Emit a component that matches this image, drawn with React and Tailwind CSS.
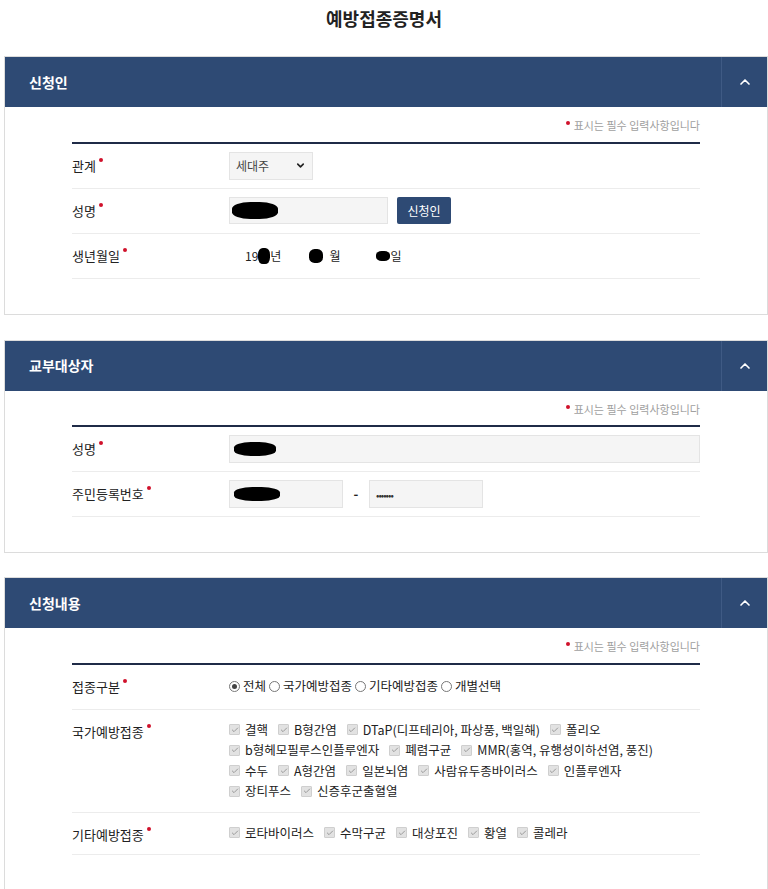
import { ChevronUp, ChevronDown, Check } from "lucide-react";

const font = { fontFamily: '"Noto Sans CJK KR", "Noto Sans", sans-serif' };

// small red dot after the label
const Req = () => <span className="relative -top-[9px] ml-[3px] inline-block h-[4px] w-[4px] rounded-full bg-[#d0112b]"></span>;

const Blob = ({ w = "w-[46px]", h = "h-[16px]" }) => (
  <span className={`inline-block ${w} ${h} rounded-[40%] bg-black align-middle`}></span>
);

const Panel = ({ title, children }) => (
  <section className="mx-[4px] mr-0 border border-[#dcdcdc] bg-white">
    <div className="flex h-[50px] items-center bg-[#2e4a74]">
      <h2 className="flex-1 pl-[24px] text-[14px] font-bold text-white">{title}</h2>
      <div className="flex h-full w-[46px] items-center justify-center border-l border-[#3f5a84]">
        <ChevronUp size={16} strokeWidth={2.5} className="text-white" />
      </div>
    </div>
    <div className="px-[67px] pb-[35px] pt-[10px]">
      <p className="pb-[8px] text-right text-[11px] text-[#a0a0a0]">
        <span className="relative -top-[5px] mr-[4px] inline-block h-[4px] w-[4px] rounded-full bg-[#d0112b]"></span>
        표시는 필수 입력사항입니다
      </p>
      <div className="border-t-2 border-[#1f2b47]">{children}</div>
    </div>
  </section>
);

const Row = ({ label, children, tall }) => (
  <div className={`flex border-b border-[#ececec] ${tall ? "py-[10px]" : "min-h-[45px] items-center"}`}>
    <div className={`w-[157px] shrink-0 text-[13px] text-[#222] ${tall ? "pt-[2px]" : ""}`}>
      {label}
      <Req />
    </div>
    <div className="flex-1">{children}</div>
  </div>
);

const Box = ({ children }) => (
  <span className="mr-[10px] inline-flex items-center whitespace-nowrap text-[12.5px] leading-[20.5px] text-[#222]">
    <span className="mr-[5px] flex h-[11px] w-[11px] items-center justify-center rounded-[1px] border border-[#cfcfcf] bg-[#e2e2e2]">
      <Check size={8} strokeWidth={3} className="text-[#9a9a9a]" />
    </span>
    {children}
  </span>
);

const Radio = ({ on, children }) => (
  <span className="mr-[3px] inline-flex items-center text-[12.5px] text-[#222]">
    <span className="mr-[3px] flex h-[11px] w-[11px] items-center justify-center rounded-full border border-[#777] bg-white">
      {on && <span className="h-[5px] w-[5px] rounded-full bg-[#444]"></span>}
    </span>
    {children}
  </span>
);

export default function App() {
  const national = [
    "결핵", "B형간염", "DTaP(디프테리아, 파상풍, 백일해)", "폴리오",
    "b형헤모필루스인플루엔자", "폐렴구균", "MMR(홍역, 유행성이하선염, 풍진)",
    "수두", "A형간염", "일본뇌염", "사람유두종바이러스", "인플루엔자",
    "장티푸스", "신증후군출혈열",
  ];
  const other = ["로타바이러스", "수막구균", "대상포진", "황열", "콜레라"];

  return (
    <div className="min-h-[889px] bg-white" style={font}>
      <h1 className="pb-[24px] pt-[5px] text-center text-[18px] font-bold text-[#222]">예방접종증명서</h1>

      <Panel title="신청인">
        <Row label="관계">
          <div className="flex h-[28px] w-[84px] items-center justify-between border border-[#e4e4e4] bg-[#f5f5f5] px-[6px] text-[12px] text-[#444]">
            세대주
            <ChevronDown size={11} strokeWidth={3.5} className="text-[#222]" />
          </div>
        </Row>
        <Row label="성명">
          <div className="flex items-center gap-[9px]">
            <div className="flex h-[27px] w-[159px] items-center border border-[#e4e4e4] bg-[#f5f5f5] pl-[2px]">
              <Blob w="w-[46px]" h="h-[17px]" />
            </div>
            <button className="h-[27px] w-[54px] rounded-[2px] bg-[#2e4a74] text-[12px] text-white">신청인</button>
          </div>
        </Row>
        <Row label="생년월일">
          <div className="flex items-center pl-[16px] text-[12px] text-[#222]">
            19<Blob w="w-[12px]" h="h-[16px]" />년
            <span className="ml-[28px]"></span><Blob w="w-[14px]" h="h-[14px]" /><span className="ml-[6px]">월</span>
            <span className="ml-[36px]"></span><Blob w="w-[14px]" h="h-[10px]" />일
          </div>
        </Row>
      </Panel>

      <div className="h-[25px]"></div>

      <Panel title="교부대상자">
        <Row label="성명">
          <div className="flex h-[28px] items-center border border-[#e4e4e4] bg-[#f5f5f5] pl-[4px]">
            <Blob w="w-[42px]" h="h-[14px]" />
          </div>
        </Row>
        <Row label="주민등록번호">
          <div className="flex items-center">
            <div className="flex h-[28px] w-[114px] items-center border border-[#e4e4e4] bg-[#f5f5f5] pl-[4px]">
              <Blob w="w-[46px]" h="h-[14px]" />
            </div>
            <span className="w-[26px] text-center text-[13px] font-bold text-[#222]">-</span>
            <div className="flex h-[28px] w-[114px] items-center border border-[#e4e4e4] bg-[#f5f5f5] pl-[6px] text-[10px] tracking-[-1px] text-[#333]">
              •••••••
            </div>
          </div>
        </Row>
      </Panel>

      <div className="h-[24px]"></div>

      <Panel title="신청내용">
        <Row label="접종구분">
          <div className="flex items-center">
            <Radio on>전체</Radio>
            <Radio>국가예방접종</Radio>
            <Radio>기타예방접종</Radio>
            <Radio>개별선택</Radio>
          </div>
        </Row>
        <Row label="국가예방접종" tall>
          <div className="flex flex-wrap pr-[20px]">
            {national.map((n) => (
              <Box key={n}>{n}</Box>
            ))}
          </div>
        </Row>
        <Row label="기타예방접종" tall>
          <div className="flex flex-wrap">
            {other.map((n) => (
              <Box key={n}>{n}</Box>
            ))}
          </div>
        </Row>
      </Panel>
    </div>
  );
}
